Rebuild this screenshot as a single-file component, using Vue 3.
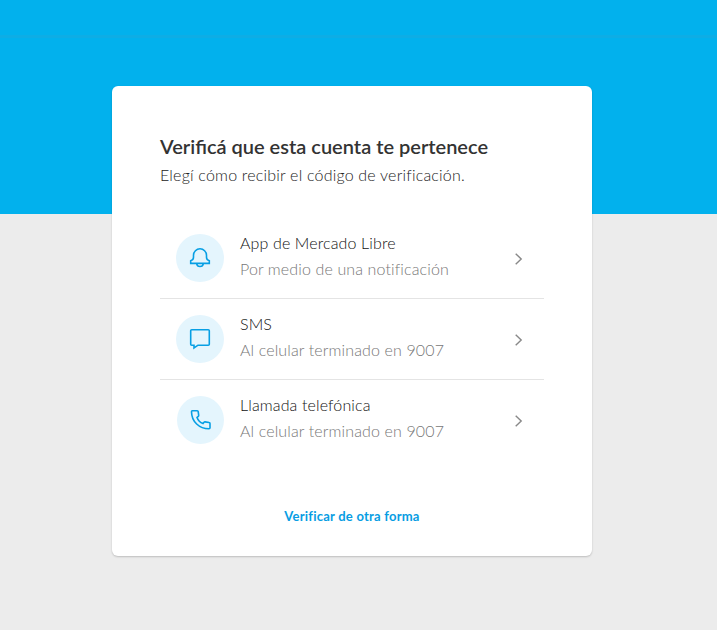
<script setup>
const options = [
  { id: 'app', icon: 'bell', title: 'App de Mercado Libre', detail: 'Por medio de una notificación' },
  { id: 'sms', icon: 'message', title: 'SMS', detail: 'Al celular terminado en 9007' },
  { id: 'call', icon: 'phone', title: 'Llamada telefónica', detail: 'Al celular terminado en 9007' },
]
</script>

<template>
  <div class="page">
    <header class="navbar"></header>
    <main class="card">
      <h1 class="heading">Verificá que esta cuenta te pertenece</h1>
      <p class="subheading">Elegí cómo recibir el código de verificación.</p>
      <ul class="options">
        <li v-for="option in options" :key="option.id" class="option" :class="option.id">
          <span class="badge">
            <svg v-if="option.icon === 'bell'" width="22" height="22" viewBox="0 0 22 22">
              <path d="M1.700 16.400v-2.600c1.900-.7 2.800-1.700 2.800-3.600V8.300a6.500 6.500 0 0 1 13 0v1.900c0 1.900.9 2.900 2.800 3.600v2.600zM7.600 16.600a3.450 3.450 0 0 0 6.800 0" />
            </svg>
            <svg v-else-if="option.icon === 'message'" width="22" height="22" viewBox="0 0 22 22">
              <path d="M2.7 1.8h16.6a1 1 0 0 1 1 1v13.400a1 1 0 0 1-1 1H9L5 20v-2.800H2.700a1 1 0 0 1-1-1V2.800a1 1 0 0 1 1-1z" />
            </svg>
            <svg v-else width="22" height="22" viewBox="0 0 22 22">
              <path d="M2.3 1.8h4.9a1 1 0 0 1 1 .9l.5 3.7a1.200 1.200 0 0 1-.5 1.100L7 8.500c1.100 3 3.200 5 6 6.100l1-1.300a1.200 1.200 0 0 1 1.100-.4l4 .6a1 1 0 0 1 .9 1v4.300a1 1 0 0 1-1 1C9.300 19.700 1.600 12.700 1.500 2.700a.9.9 0 0 1 .8-.9z" />
            </svg>
          </span>
          <span class="text">
            <span class="title">{{ option.title }}</span>
            <span class="detail">{{ option.detail }}</span>
          </span>
          <svg class="chevron" width="8" height="12" viewBox="0 0 8 12">
            <path d="M.7 .7 6.200 6 .7 11.300" />
          </svg>
        </li>
      </ul>
      <a class="other">Verificar de otra forma</a>
    </main>
  </div>
</template>

<style>
body {
  margin: 0;
  background: #ececec;
}
</style>

<style scoped>
.page {
  box-sizing: border-box;
  height: 630px;
  padding: 0 125px 0 112px;
  overflow: hidden;
  background: linear-gradient(#02b1ed 214px, #ececec 214px);
  font-family: Lato, "Liberation Sans", sans-serif;
}
.navbar {
  box-sizing: border-box;
  height: 38px;
  margin: 0 -125px 48px -112px;
  border-bottom: 3px solid #0eade5;
}
.card {
  box-sizing: border-box;
  width: 480px;
  height: 470px;
  padding: 47px 48px 48px;
  display: flex;
  flex-direction: column;
  background: #fff;
  border-radius: 6px;
  box-shadow: 0 1px 2px rgba(0, 0, 0, 0.2);
}
.heading {
  margin: 0;
  font-size: 20px;
  line-height: 26px;
  font-weight: 600;
  color: #333;
  white-space: nowrap;
}
.subheading {
  margin: 5px 0 0;
  font-size: 16px;
  line-height: 22px;
  font-weight: 300;
  letter-spacing: 0.2px;
  color: #222;
  white-space: nowrap;
}
.options {
  list-style: none;
  margin: 32px 0 0;
  padding: 0;
}
.option {
  display: flex;
  align-items: center;
  gap: 16px;
  height: 80px;
  padding: 0 21px 0 16px;
  border-bottom: 1px solid #e4e4e4;
}
.option:last-child {
  border-bottom: 0;
}
.badge {
  width: 48px;
  height: 48px;
  border-radius: 50%;
  display: flex;
  align-items: center;
  justify-content: center;
  background: #e4f5fd;
}
.badge svg {
  fill: none;
  stroke: #079fe4;
  stroke-width: 1.6;
}
.call .badge {
  width: 47px;
  margin-left: 1px;
}
.call .badge svg {
  margin-left: 1px;
}
.text {
  flex: 1;
  display: flex;
  flex-direction: column;
  font-size: 16px;
  line-height: 26px;
  font-weight: 300;
  letter-spacing: 0.13px;
  white-space: nowrap;
  padding-bottom: 4px;
}
.title {
  color: #111;
}
.detail {
  color: #777;
}
.chevron {
  margin-top: 2px;
  fill: none;
  stroke: #888;
  stroke-width: 1.4;
}
.other {
  margin-top: 46px;
  text-align: center;
  font-size: 13px;
  line-height: 20px;
  font-weight: 700;
  letter-spacing: 0.23px;
  color: #079de3;
}
</style>
